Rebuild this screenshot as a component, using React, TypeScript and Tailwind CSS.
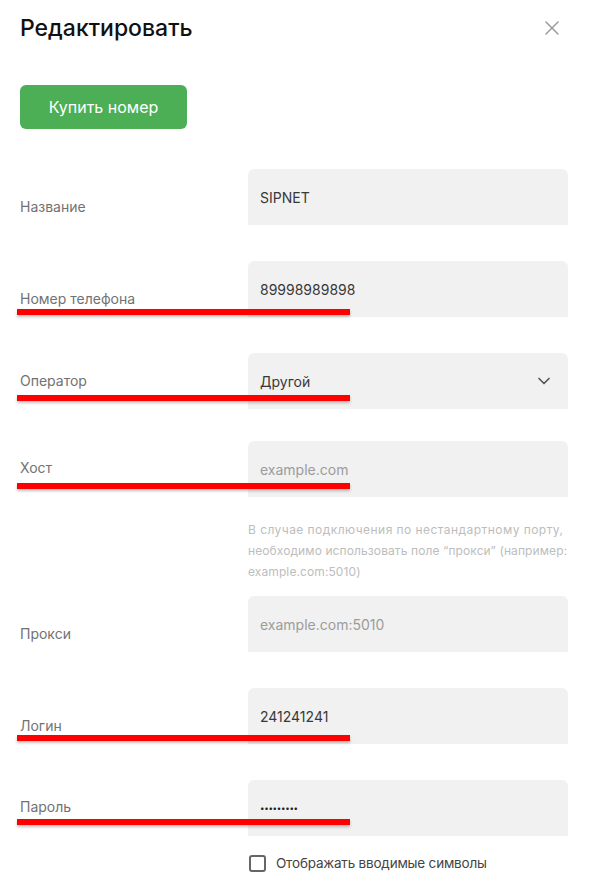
import { ChevronDown, X } from "lucide-react";

interface RowProps {
  label: string;
  labelTop: string;
  mt: string;
  value?: string;
  placeholder?: string;
  select?: boolean;
  password?: boolean;
  lineTop?: string;
}

function Row({ label, labelTop, mt, value, placeholder, select, password, lineTop }: RowProps) {
  return (
    <div className={`relative flex px-5 ${mt}`}>
      <div className={`w-[228px] text-[14px] text-[#727272] ${labelTop}`}>{label}</div>
      <div className="flex h-14 w-[320px] items-center justify-between rounded-t-md bg-[#f1f1f1] pl-3 pr-[14px]">
        {password ? (
          <span className="text-[8px] tracking-[-0.3px] text-[#222]">•••••••••</span>
        ) : value ? (
          <span className="text-[14px] text-[#383838]">{value}</span>
        ) : (
          <span className="text-[14px] text-[#9c9c9c]">{placeholder}</span>
        )}
        {select && <ChevronDown className="size-5 text-[#555]" strokeWidth={2} />}
      </div>

      {/* red annotation line */}
      {lineTop && (
        <div
          className={`absolute left-[17px] h-[6px] w-[333px] bg-[#ff0000] shadow-[0_2px_3px_rgba(0,0,0,0.25)] ${lineTop}`}
        />
      )}
    </div>
  );
}

export default function App() {
  return (
    <div className="h-[888px] w-[590px] overflow-hidden bg-white font-['Inter','Noto_Sans',sans-serif]">
      {/* Header */}
      <div className="flex items-center justify-between pl-5 pr-[26px] pt-[13px]">
        <h1 className="text-[23px] font-medium leading-[30px] text-[#111]">Редактировать</h1>
        <X className="size-6 text-[#9a9a9a]" strokeWidth={1.5} />
      </div>

      <div className="px-5 pt-[42px]">
        <button className="h-11 w-[167px] rounded-md bg-[#4caf55] text-[16px] text-white">
          Купить номер
        </button>
      </div>

      <Row label="Название" labelTop="pt-[27px]" mt="mt-10" value="SIPNET" />
      <Row label="Номер телефона" labelTop="pt-[27px]" mt="mt-9" value="89998989898" lineTop="top-[48px]" />
      <Row label="Оператор" labelTop="pt-[17px]" mt="mt-9" value="Другой" select lineTop="top-[42px]" />
      <Row label="Хост" labelTop="pt-[16px]" mt="mt-8" placeholder="example.com" lineTop="top-[42px]" />

      <p className="ml-[248px] mt-[22px] whitespace-nowrap text-[12px] leading-[21px] text-[#bdbdbd]">
        <span className="tracking-[0.45px]">В случае подключения по нестандартному порту,</span>
        <br />
        <span className="tracking-[0.1px]">необходимо использовать поле “прокси” (например:</span>
        <br />
        <span className="tracking-[0.1px]">example.com:5010)</span>
      </p>

      <Row label="Прокси" labelTop="pt-[27px]" mt="mt-[14px]" placeholder="example.com:5010" />
      <Row label="Логин" labelTop="pt-[27px]" mt="mt-9" value="241241241" lineTop="top-[47px]" />
      <Row label="Пароль" labelTop="pt-[16px]" mt="mt-9" password lineTop="top-[39px]" />

      <label className="ml-[249px] mt-[17px] flex items-center gap-[10px]">
        <span className="size-[17px] rounded-[3px] border-2 border-[#666]" />
        <span className="text-[13.5px] tracking-[-0.2px] text-[#444]">Отображать вводимые символы</span>
      </label>
    </div>
  );
}
